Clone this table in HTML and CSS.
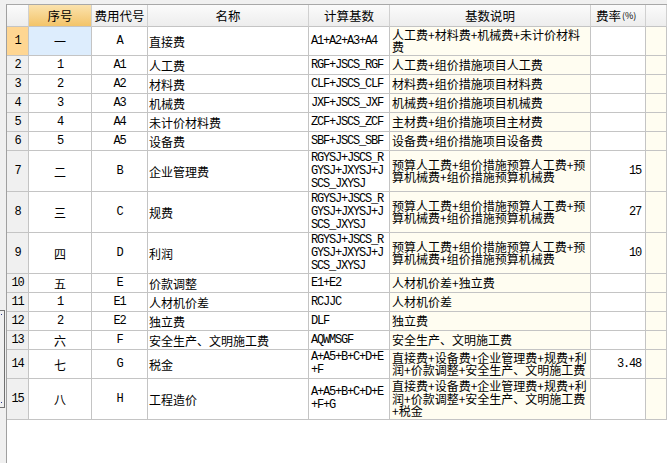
FILE: index.html
```html
<!DOCTYPE html>
<html lang="zh-CN">
<head>
<meta charset="utf-8">
<title>费用汇总</title>
<link rel="stylesheet" href="styles.css">
</head>
<body>
<div class="page">
  <div class="gutter">
    <div class="bracket"><span class="dot"></span><span class="dot"></span></div>
  </div>
  <div class="sheet">
    <div class="row head">
      <div class="c rh"></div>
      <div class="c ctr sel-head">序号</div>
      <div class="c ctr">费用代号</div>
      <div class="c ctr">名称</div>
      <div class="c ctr">计算基数</div>
      <div class="c ctr">基数说明</div>
      <div class="c rate-h">费率<span class="pct">(%)</span></div>
      <div class="c"></div>
    </div>

    <div class="row h29">
      <div class="c rh sel-rh mono">1</div>
      <div class="c ctr sel-cell">一</div>
      <div class="c ctr mono">A</div>
      <div class="c name">直接费</div>
      <div class="c calc mono">A1+A2+A3+A4</div>
      <div class="c desc">人工费+材料费+机械费+未计价材料<br>费</div>
      <div class="c rate mono"></div>
      <div class="c cream"></div>
    </div>

    <div class="row h19">
      <div class="c rh mono">2</div>
      <div class="c ctr mono">1</div>
      <div class="c ctr mono">A1</div>
      <div class="c name">人工费</div>
      <div class="c calc mono">RGF+JSCS_RGF</div>
      <div class="c desc">人工费+组价措施项目人工费</div>
      <div class="c rate mono"></div>
      <div class="c cream"></div>
    </div>

    <div class="row h19">
      <div class="c rh mono">3</div>
      <div class="c ctr mono">2</div>
      <div class="c ctr mono">A2</div>
      <div class="c name">材料费</div>
      <div class="c calc mono">CLF+JSCS_CLF</div>
      <div class="c desc">材料费+组价措施项目材料费</div>
      <div class="c rate mono"></div>
      <div class="c cream"></div>
    </div>

    <div class="row h19">
      <div class="c rh mono">4</div>
      <div class="c ctr mono">3</div>
      <div class="c ctr mono">A3</div>
      <div class="c name">机械费</div>
      <div class="c calc mono">JXF+JSCS_JXF</div>
      <div class="c desc">机械费+组价措施项目机械费</div>
      <div class="c rate mono"></div>
      <div class="c cream"></div>
    </div>

    <div class="row h19">
      <div class="c rh mono">5</div>
      <div class="c ctr mono">4</div>
      <div class="c ctr mono">A4</div>
      <div class="c name">未计价材料费</div>
      <div class="c calc mono">ZCF+JSCS_ZCF</div>
      <div class="c desc">主材费+组价措施项目主材费</div>
      <div class="c rate mono"></div>
      <div class="c cream"></div>
    </div>

    <div class="row h19">
      <div class="c rh mono">6</div>
      <div class="c ctr mono">5</div>
      <div class="c ctr mono">A5</div>
      <div class="c name">设备费</div>
      <div class="c calc mono">SBF+JSCS_SBF</div>
      <div class="c desc">设备费+组价措施项目设备费</div>
      <div class="c rate mono"></div>
      <div class="c cream"></div>
    </div>

    <div class="row h41">
      <div class="c rh mono">7</div>
      <div class="c ctr">二</div>
      <div class="c ctr mono">B</div>
      <div class="c name">企业管理费</div>
      <div class="c calc mono">RGYSJ+JSCS_R<br>GYSJ+JXYSJ+J<br>SCS_JXYSJ</div>
      <div class="c desc">预算人工费+组价措施预算人工费+预<br>算机械费+组价措施预算机械费</div>
      <div class="c rate mono">15</div>
      <div class="c cream"></div>
    </div>

    <div class="row h41">
      <div class="c rh mono">8</div>
      <div class="c ctr">三</div>
      <div class="c ctr mono">C</div>
      <div class="c name">规费</div>
      <div class="c calc mono">RGYSJ+JSCS_R<br>GYSJ+JXYSJ+J<br>SCS_JXYSJ</div>
      <div class="c desc">预算人工费+组价措施预算人工费+预<br>算机械费+组价措施预算机械费</div>
      <div class="c rate mono">27</div>
      <div class="c cream"></div>
    </div>

    <div class="row h41">
      <div class="c rh mono">9</div>
      <div class="c ctr">四</div>
      <div class="c ctr mono">D</div>
      <div class="c name">利润</div>
      <div class="c calc mono">RGYSJ+JSCS_R<br>GYSJ+JXYSJ+J<br>SCS_JXYSJ</div>
      <div class="c desc">预算人工费+组价措施预算人工费+预<br>算机械费+组价措施预算机械费</div>
      <div class="c rate mono">10</div>
      <div class="c cream"></div>
    </div>

    <div class="row h19">
      <div class="c rh mono">10</div>
      <div class="c ctr">五</div>
      <div class="c ctr mono">E</div>
      <div class="c name">价款调整</div>
      <div class="c calc mono">E1+E2</div>
      <div class="c desc">人材机价差+独立费</div>
      <div class="c rate mono"></div>
      <div class="c cream"></div>
    </div>

    <div class="row h19">
      <div class="c rh mono">11</div>
      <div class="c ctr mono">1</div>
      <div class="c ctr mono">E1</div>
      <div class="c name">人材机价差</div>
      <div class="c calc mono">RCJJC</div>
      <div class="c desc">人材机价差</div>
      <div class="c rate mono"></div>
      <div class="c cream"></div>
    </div>

    <div class="row h19">
      <div class="c rh mono">12</div>
      <div class="c ctr mono">2</div>
      <div class="c ctr mono">E2</div>
      <div class="c name">独立费</div>
      <div class="c calc mono">DLF</div>
      <div class="c desc">独立费</div>
      <div class="c rate mono"></div>
      <div class="c cream"></div>
    </div>

    <div class="row h19">
      <div class="c rh mono">13</div>
      <div class="c ctr">六</div>
      <div class="c ctr mono">F</div>
      <div class="c name">安全生产、文明施工费</div>
      <div class="c calc mono">AQWMSGF</div>
      <div class="c desc">安全生产、文明施工费</div>
      <div class="c rate mono"></div>
      <div class="c cream"></div>
    </div>

    <div class="row h29">
      <div class="c rh mono">14</div>
      <div class="c ctr">七</div>
      <div class="c ctr mono">G</div>
      <div class="c name">税金</div>
      <div class="c calc mono">A+A5+B+C+D+E<br>+F</div>
      <div class="c desc">直接费+设备费+企业管理费+规费+利<br>润+价款调整+安全生产、文明施工费</div>
      <div class="c rate mono">3.48</div>
      <div class="c cream"></div>
    </div>

    <div class="row h41">
      <div class="c rh mono">15</div>
      <div class="c ctr">八</div>
      <div class="c ctr mono">H</div>
      <div class="c name">工程造价</div>
      <div class="c calc mono">A+A5+B+C+D+E<br>+F+G</div>
      <div class="c desc">直接费+设备费+企业管理费+规费+利<br>润+价款调整+安全生产、文明施工费<br>+税金</div>
      <div class="c rate mono"></div>
      <div class="c cream"></div>
    </div>
  </div>
</div>
</body>
</html>
```

FILE: styles.css
```css
html, body {
  margin: 0;
  padding: 0;
  background: #f0f0f0;
  height: 100%;
  overflow: hidden;
}

.page {
  display: flex;
  height: 463px;
  font-family: "Noto Sans CJK SC", "Liberation Sans", sans-serif;
  font-size: 12px;
  color: #000;
}

.gutter {
  width: 6px;
  flex: none;
  padding-top: 310px;
  box-sizing: border-box;
}

.bracket {
  width: 5px;
  height: 98px;
  box-sizing: border-box;
  border-top: 1px solid #707070;
  border-bottom: 1px solid #707070;
  border-right: 1px solid #707070;
  display: flex;
  flex-direction: column;
  justify-content: space-between;
  padding: 3px 0 4px 1px;
}

.dot {
  display: block;
  width: 1px;
  height: 1px;
  background: #2a3a8a;
}

.sheet {
  flex: 1;
  margin-top: 4px;
  border-top: 1px solid #a8a8a8;
  border-left: 1px solid #a0a0a0;
  background: #fff;
  min-width: 0;
  overflow: hidden;
}

.row {
  display: grid;
  grid-template-columns: 22px 63px 56px 161px 81px 201px 55px 1fr;
}

.c {
  box-sizing: border-box;
  border-right: 1px solid #c4c4c4;
  border-bottom: 1px solid #c4c4c4;
  display: flex;
  align-items: center;
  white-space: nowrap;
  line-height: 13px;
}

.head { height: 22px; }
.h19 { height: 19px; }
.h29 { height: 29px; }
.h41 { height: 41px; }

.head .c {
  background: linear-gradient(to bottom, #fbfbfb, #ededed);
  border-right-color: #d0d0d0;
  font-size: 12.5px;
}

.head .sel-head {
  background: linear-gradient(to bottom, #fbe2ad, #f3c469);
}

.ctr { justify-content: center; }

.rh {
  background: #f0f0f0;
  justify-content: center;
}

.sel-rh { background: #ffd692; }
.sel-cell { background: #ddedfd; }

.mono {
  font-family: "Liberation Mono", "DejaVu Sans Mono", monospace;
  font-size: 12px;
  letter-spacing: -1.2px;
}

.name { padding-left: 1px; }

.calc {
  padding-left: 2px;
  line-height: 13px;
}

.desc {
  padding-left: 2px;
  background: #fffdf1;
  line-height: 12.5px;
}

.rate {
  justify-content: flex-end;
  padding-right: 4px;
}

.rate-h {
  padding-left: 5px;
}

.pct {
  font-size: 9px;
  margin-left: 1px;
}

.cream { background: #fffdf1; }
```
